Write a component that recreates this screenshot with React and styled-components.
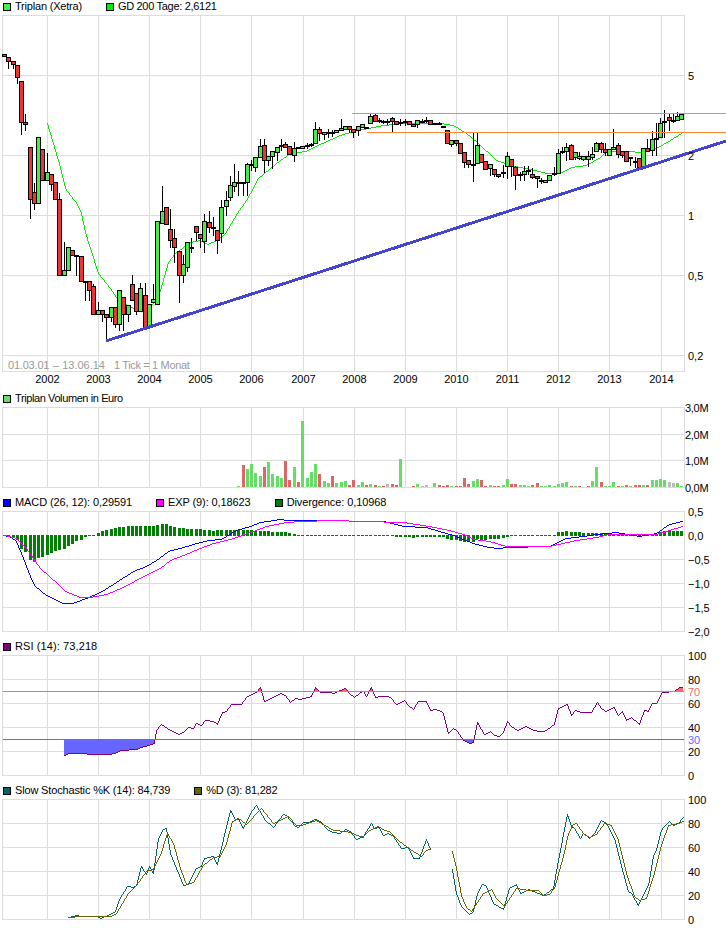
import React from "react";
import styled, { createGlobalStyle } from "styled-components";

const Global = createGlobalStyle`
  html, body { margin: 0; padding: 0; background: #fff; }
  body { font-family: "Liberation Sans", Arial, sans-serif; }
`;

const Page = styled.div`
  width: 726px;
  height: 928px;
  display: flex;
  flex-direction: column;
  overflow: hidden;
  background: #fff;
`;
const Legend = styled.div`
  height: 15px;
  box-sizing: border-box;
  padding: 0 0 2px 3px;
  display: flex;
  align-items: center;
  gap: 24px;
  font-size: 11px;
  line-height: 13px;
  color: #000;
  white-space: nowrap;
`;
const LegendItem = styled.div`
  display: flex;
  align-items: center;
  gap: 4px;
`;
const LegendLabel = styled.span`
  letter-spacing: ${(p) => p.$ls}px;
`;
const Swatch = styled.span`
  width: 8px;
  height: 8px;
  box-sizing: border-box;
  border: 1px solid #000;
  background: ${(p) => p.$color};
`;
const PlotSvg = styled.svg`
  display: block;
  width: 726px;
  flex: none;
  overflow: visible;
  font-family: "Liberation Sans", Arial, sans-serif;
  font-size: 11px;
`;
const Grid = styled.line`
  stroke: #dcdcdc;
  stroke-width: 1;
  shape-rendering: crispEdges;
`;
const CurvePath = styled.path`
  fill: ${(p) => p.$color};
  stroke: none;
  shape-rendering: crispEdges;
`;
const Area = styled.polygon`
  fill: ${(p) => p.$color};
  stroke: none;
  shape-rendering: crispEdges;
`;
const Bar = styled.rect`
  fill: ${(p) => p.$color};
  shape-rendering: crispEdges;
`;
const Body = styled.rect`
  fill: ${(p) => p.$color};
  stroke: #000;
  stroke-width: 1;
  shape-rendering: crispEdges;
`;
const Wick = styled.line`
  stroke: #000;
  stroke-width: 1;
  shape-rendering: crispEdges;
`;
const Level = styled.line`
  stroke: ${(p) => p.$color};
  stroke-width: ${(p) => p.$w || 1};
  shape-rendering: crispEdges;
`;
const AxisText = styled.text`
  fill: ${(p) => p.$color || "#000"};
  letter-spacing: ${(p) => p.$ls || 0}px;
`;

const GRID_X = [47, 98, 149, 200, 251, 303, 354, 405, 456, 507, 558, 609, 661];
const YEARS = [2002, 2003, 2004, 2005, 2006, 2007, 2008, 2009, 2010, 2011, 2012, 2013, 2014];
const LEFT = 2;
const RIGHT = 684;
const cx = (i) => Math.round(4 + 4.261 * i) + 0.5;
const snap = (v) => Math.floor(v) + 0.5;
const z = (ox, oy, pts) => pts.map(([x, y]) => `${snap(ox + x / 3)},${snap(oy + y / 3)}`);
const pts = (...groups) => groups.flat().join(" ");

/* Rasterises a polyline to single pixels, as the original chart image has aliased one-pixel strokes. */
const rasterise = (points) => {
  const list = points.split(" ").map((p) => p.split(",").map((n) => Math.floor(+n)));
  const seen = new Set();
  for (let n = 0; n < list.length - 1; n++) {
    let [x0, y0] = list[n];
    const [x1, y1] = list[n + 1];
    const dx = Math.abs(x1 - x0);
    const dy = Math.abs(y1 - y0);
    const sx = x0 < x1 ? 1 : -1;
    const sy = y0 < y1 ? 1 : -1;
    let err = dx - dy;
    for (;;) {
      seen.add(`M${x0} ${y0}h1v1h-1z`);
      if (x0 === x1 && y0 === y1) break;
      const e2 = 2 * err;
      if (e2 > -dy) { err -= dy; x0 += sx; }
      if (e2 < dx) { err += dx; y0 += sy; }
    }
  }
  return [...seen].join("");
};

const Curve = ({ points, $color }) => <CurvePath d={rasterise(points)} $color={$color} />;

function Plot({ top, height, rows, children, labels, x = 688, ls = 0 }) {
  const bottom = rows[rows.length - 1];
  return (
    <PlotSvg height={height} viewBox={`0 ${top} 726 ${height}`}>
      {rows.map((r) => (
        <Grid key={r} x1={LEFT} x2={RIGHT + 1} y1={r + 0.5} y2={r + 0.5} />
      ))}
      <Grid x1={LEFT + 0.5} x2={LEFT + 0.5} y1={rows[0]} y2={bottom + 1} />
      <Grid x1={RIGHT + 0.5} x2={RIGHT + 0.5} y1={rows[0]} y2={bottom + 1} />
      {GRID_X.map((g) => (
        <Grid key={g} x1={g + 0.5} x2={g + 0.5} y1={rows[0]} y2={bottom + 1} />
      ))}
      {children}
      {labels.map(([t, y, c]) => (
        <AxisText key={t} x={x} y={y + 5} $color={c} $ls={ls}>{t}</AxisText>
      ))}
    </PlotSvg>
  );
}

/* i, bodyTop, bodyBottom, high, low, kind: 1 up, 0 down, 2 doji */
const CANDLES = [
  [0,54,56,54,56,0],[1,57,61,57,68,0],[2,61,64,61,68,0],[3,65,77,65,83,0],[4,81,122,81,134,0],[5,122,124,114,130,0],
  [6,147,199,147,218,0],[7,192,203,183,209,0],[8,137,203,137,203,1],[9,149,180,149,180,0],[10,172,180,153,180,1],[11,174,184,174,190,0],
  [12,182,199,182,199,0],[13,199,275,193,275,0],[14,270,275,242,275,1],[15,247,270,247,270,1],[16,250,255,250,255,0],[17,255,255,255,275,2],
  [18,256,281,256,281,0],[19,281,281,281,300,2],[20,281,290,281,300,0],[21,286,314,284,314,0],[22,310,314,302,314,1],[23,310,314,310,321,0],
  [24,314,317,314,341,0],[25,307,317,307,321,1],[26,307,324,307,327,0],[27,290,324,290,330,1],[28,297,314,297,330,0],[29,305,314,305,321,1],
  [30,284,300,275,300,0],[31,293,311,293,314,0],[32,288,311,283,311,1],[33,295,327,283,327,0],[34,304,327,304,327,1],[35,299,302,284,302,1],
  [36,221,304,221,304,1],[37,211,223,186,223,1],[38,207,224,207,224,0],[39,229,240,209,247,0],[40,238,247,229,262,0],[41,251,275,251,302,0],
  [42,264,275,255,282,1],[43,242,267,242,271,1],[44,247,247,238,252,2],[45,226,232,226,240,0],[46,234,238,234,247,0],[47,221,241,214,252,1],
  [48,222,227,211,232,0],[49,227,227,217,235,2],[50,230,240,230,253,0],[51,207,233,200,242,1],[52,200,206,191,215,1],[53,185,197,176,200,1],
  [54,182,186,164,191,1],[55,182,182,171,195,2],[56,182,183,182,195,2],[57,164,182,163,195,1],[58,164,164,160,170,2],[59,157,167,157,171,1],
  [60,146,157,139,157,1],[61,145,160,139,172,0],[62,156,160,156,165,1],[63,151,156,151,168,1],[64,147,152,147,160,1],[65,145,145,139,150,2],
  [66,144,147,142,147,0],[67,146,154,146,154,0],[68,148,155,142,161,1],[69,147,147,147,148,2],[70,146,148,146,148,1],[71,145,146,143,148,1],
  [72,144,145,143,146,2],[73,129,143,122,143,1],[74,129,133,127,140,0],[75,132,134,132,139,1],[76,132,132,129,137,2],[77,132,132,130,136,2],
  [78,130,132,130,132,1],[79,128,130,119,130,1],[80,126,129,126,129,1],[81,126,129,126,132,0],[82,129,132,129,137,0],[83,126,130,126,135,1],
  [84,124,127,124,127,1],[85,127,127,127,128,2],[86,116,123,113,123,1],[87,115,121,113,121,0],[88,120,120,118,122,2],[89,121,121,120,123,2],
  [90,121,121,119,124,2],[91,118,121,117,132,0],[92,121,124,121,124,0],[93,122,122,119,125,2],[94,121,121,119,125,2],[95,121,124,121,124,0],
  [96,124,126,124,126,0],[97,120,124,120,127,1],[98,121,121,119,122,2],[99,120,120,117,122,2],[100,120,124,120,124,0],[101,123,123,123,124,2],
  [102,123,123,122,124,2],[103,126,126,126,127,2],[104,130,143,130,143,0],[105,140,144,140,146,1],[106,140,143,140,145,0],[107,143,153,143,153,0],
  [108,152,162,152,167,0],[109,160,164,160,167,0],[110,164,164,133,181,2],[111,145,163,133,163,1],[112,154,162,154,162,0],[113,161,169,161,169,0],
  [114,164,168,164,175,1],[115,169,174,169,176,0],[116,174,176,174,177,0],[117,172,172,165,177,2],[118,156,166,152,178,1],[119,159,166,159,176,0],
  [120,167,175,166,189,0],[121,174,174,172,180,2],[122,171,174,166,180,1],[123,170,170,166,174,2],[124,174,177,168,178,0],[125,176,178,176,187,0],
  [126,180,180,178,183,2],[127,180,182,180,182,1],[128,175,180,175,180,1],[129,173,173,167,175,2],[130,153,173,149,173,1],[131,151,151,147,153,2],
  [132,147,151,143,160,1],[133,145,159,144,159,0],[134,152,157,152,159,1],[135,156,158,152,159,1],[136,156,159,156,160,1],[137,156,159,151,166,1],
  [138,154,157,147,159,1],[139,143,151,142,151,1],[140,143,149,142,152,0],[141,149,152,143,155,0],[142,149,155,149,155,1],[143,147,149,129,149,1],
  [144,145,154,143,157,0],[145,151,155,151,157,0],[146,151,161,151,161,0],[147,157,157,157,165,2],[148,161,161,157,167,2],[149,158,167,158,167,0],
  [150,148,166,148,167,1],[151,148,151,139,151,0],[152,139,150,131,155,1],[153,138,138,123,155,2],[154,123,137,118,137,1],[155,121,121,110,137,2],
  [156,117,120,113,130,0],[157,120,120,113,122,2],[158,116,120,112,120,1],[159,114,119,114,119,1],
];

const MA = pts(
  [[47,123],[53,143],[60,167],[65,188],[73,199],[76,202],[81,213],[85,232],[90,248],[98,273],[110,288],[118,300],[133,308],[147,307],[157,300],[162,283],[168,262],[175,253],[190,242],[200,240],[207,244],[217,240],[225,233],[237,213],[246,200],[250,193],[258,178],[270,168],[280,160],[290,153],[305,151],[322,143],[340,135],[353,131],[363,129],[383,125],[403,123],[440,123],[453,125],[466,133],[478,143],[496,160],[510,165],[530,169],[546,173],[560,173],[571,167],[586,165],[600,157],[606,151],[626,151],[643,152],[656,148],[670,140],[681,133]].map(([x,y]) => `${x + 0.5},${y + 0.5}`)
);

const VOL = [[55,1,"g"],[56,22,"r"],[57,18,"g"],[58,23,"g"],[59,14,"g"],[60,11,"g"],[61,20,"r"],[62,25,"g"],[63,13,"g"],[64,11,"g"],[65,9,"g"],[66,26,"r"],[67,7,"r"],[68,20,"g"],[69,5,"r"],[70,66,"g"],[71,9,"g"],[72,15,"g"],[73,23,"g"],[74,13,"r"],[75,6,"g"],[76,4,"g"],[77,11,"r"],[78,4,"g"],[79,5,"g"],[80,6,"g"],[81,2,"r"],[82,7,"r"],[83,2,"g"],[84,5,"g"],[85,2,"r"],[86,3,"g"],[87,2,"r"],[88,1,"g"],[89,1,"r"],[90,3,"n"],[91,3,"r"],[92,2,"r"],[93,28,"g"],[96,1,"r"],[97,3,"g"],[98,1,"n"],[99,2,"n"],[101,4,"g"],[102,2,"r"],[103,1,"r"],[104,2,"r"],[105,1,"g"],[106,1,"r"],[107,1,"r"],[108,9,"r"],[109,3,"r"],[110,6,"g"],[111,8,"g"],[112,7,"r"],[113,1,"r"],[114,2,"g"],[115,1,"r"],[116,1,"r"],[117,2,"g"],[118,8,"g"],[119,3,"r"],[120,3,"r"],[121,2,"g"],[122,2,"g"],[123,1,"g"],[124,2,"r"],[125,4,"r"],[126,1,"g"],[127,1,"g"],[128,2,"g"],[129,1,"g"],[130,3,"g"],[131,4,"g"],[132,5,"g"],[133,1,"r"],[134,1,"g"],[135,1,"r"],[137,1,"r"],[138,6,"g"],[139,20,"g"],[140,5,"r"],[141,1,"g"],[142,1,"g"],[143,5,"g"],[144,1,"r"],[145,1,"g"],[146,2,"r"],[147,1,"g"],[148,2,"r"],[149,2,"r"],[150,2,"g"],[151,2,"r"],[152,7,"g"],[153,7,"g"],[154,8,"g"],[155,7,"g"],[156,5,"n"],[157,4,"n"],[158,4,"g"],[159,1,"g"]];
const VOL_COLOR = { g: "#66dd66", r: "#dd6666", n: "#bbbbbb" };

const DIV = [0,-1,-3,-5,-14,-17,-25,-27,-23,-22,-20,-18,-16,-15,-14,-11,-9,-6,-5,-2,-1,0,3,5,6,7,8,9,9,10,10,10,10,10,10,10,11,12,12,10,9,8,8,7,7,7,7,6,6,5,6,6,6,6,6,6,6,6,6,5,5,5,5,4,4,4,4,3,2,1,1,0,0,0,1,1,1,0,0,0,0,0,0,0,-1,-1,0,0,0,0,-1,-1,-2,-2,-2,-2,-3,-2,-2,-2,-2,-2,-2,-2,-4,-5,-5,-6,-7,-7,-7,-4,-5,-5,-4,-4,-4,-3,-2,-1,-1,-1,-1,0,0,0,0,0,1,1,4,4,5,4,4,4,3,3,3,3,3,2,2,2,1,1,1,0,-1,-1,0,0,1,2,4,5,5,5,5,5];

const MACD = pts(
  z(0,490,[[12,136],[35,142],[50,155],[70,205],[90,260],[105,288],[140,315],[190,340],[218,340],[260,325],[300,308],[350,277],[400,245],[440,230],[470,210],[505,183],[550,173],[600,158],[625,150],[665,147],[710,120],[750,108],[780,97],[840,88],[860,90],[1000,92],[1089,94]]),
  z(363,490,[[0,95],[60,95],[120,108],[190,113],[230,125],[270,135],[330,160],[375,172],[410,175],[430,172],[560,170],[610,145],[660,138],[700,132],[760,128],[810,136],[830,139],[880,130],[920,103],[958,94]])
);
const EXP = pts(
  z(0,490,[[12,136],[50,145],[80,175],[120,235],[175,283],[195,303],[240,322],[270,322],[320,314],[370,292],[430,260],[480,235],[510,212],[550,195],[600,175],[640,160],[690,147],[750,127],[800,108],[860,96],[900,93],[1000,90],[1089,94]]),
  z(363,490,[[0,94],[120,98],[200,108],[260,120],[300,132],[330,148],[380,155],[430,168],[560,170],[640,152],[700,143],[740,134],[800,133],[880,134],[920,120],[958,108]])
);

const RSI_PTS = [
  ...z(0,635,[[192,362],[205,355],[260,355],[262,358],[325,358],[345,354],[360,346],[410,343],[425,336],[445,330],[463,324],[470,285],[485,268],[510,285],[535,297],[550,292],[565,277],[580,280],[590,265],[605,272],[615,256],[640,258],[652,268],[668,232],[680,228],[695,208],[725,207],[742,183],[770,173],[780,157],[793,198],[840,175],[855,180],[872,203],[885,190],[900,192],[935,183],[945,157],[962,172],[990,172],[1000,176],[1020,165],[1035,160],[1048,176],[1063,187],[1080,172],[1089,170]]),
  ...z(363,635,[[0,170],[10,185],[25,157],[38,187],[50,183],[75,185],[85,190],[100,208],[125,196],[140,215],[152,224],[165,199],[190,199],[203,226],[215,222],[230,225],[242,236],[255,296],[270,280],[282,288],[300,316],[318,326],[330,322],[343,262],[365,298],[382,290],[395,300],[408,304],[420,292],[433,260],[445,275],[462,286],[490,274],[510,286],[530,289],[545,289],[575,268],[585,220],[612,208],[625,241],[638,226],[655,232],[685,231],[702,202],[715,220],[728,229],[755,216],[765,241],[778,229],[790,256],[805,248],[830,268],[845,225],[855,230],[868,205],[880,205],[897,171],[935,168],[950,158],[958,158]]),
];
const RSI = RSI_PTS.join(" ");
const RSI_END = RSI_PTS[RSI_PTS.length - 1].split(",")[0];

const K1 = pts(
  z(0,780,[[205,411],[228,406],[240,410],[290,409],[300,414],[315,408],[345,395],[358,358],[383,318],[400,322],[410,315],[423,260],[438,282],[448,258],[460,280],[475,175],[490,147],[498,145],[510,220],[550,315],[565,312],[590,265],[605,258],[612,235],[640,230],[653,252],[690,92],[705,118],[715,115],[730,145],[750,100],[770,76],[795,120],[820,142],[850,103],[860,105],[885,140],[895,142],[910,128],[925,128],[945,118],[960,125],[985,152],[1000,158],[1020,160],[1035,148],[1050,155],[1070,178],[1089,170]]),
  z(363,780,[[0,170],[25,130],[35,145],[50,142],[62,165],[75,160],[90,168],[115,205],[135,202],[150,235],[170,235],[190,178],[203,208]])
);
const K2 = pts(z(363,780,[[268,268],[280,340],[295,380],[320,403],[330,395],[342,340],[358,313],[370,320],[390,370],[420,388],[440,325],[460,313],[473,340],[495,328],[540,345],[570,325],[585,240],[612,103],[625,140],[635,145],[652,175],[660,160],[680,175],[695,160],[715,120],[730,130],[755,175],[780,280],[795,335],[805,340],[825,377],[845,340],[855,315],[870,230],[880,210],[895,150],[905,140],[920,125],[932,135],[945,130],[960,112]]));
const D1 = pts(
  z(0,780,[[205,411],[240,410],[290,410],[330,410],[350,400],[385,340],[410,315],[440,275],[460,268],[480,225],[503,160],[520,190],[540,265],[560,312],[580,306],[610,255],[640,232],[660,228],[680,190],[698,125],[715,115],[740,133],[785,85],[820,130],[865,110],[890,135],[905,135],[950,120],[1000,150],[1040,155],[1089,172]]),
  z(363,780,[[0,170],[20,150],[45,138],[65,152],[80,155],[110,185],[130,200],[150,215],[175,230],[190,210],[203,205]])
);
const D2 = pts(z(363,780,[[268,215],[280,265],[295,345],[310,382],[325,395],[360,340],[385,328],[400,355],[425,380],[460,325],[495,332],[525,330],[540,345],[560,342],[575,325],[600,230],[615,160],[630,132],[640,130],[660,160],[680,172],[700,162],[725,130],[745,135],[765,180],[790,280],[815,350],[830,362],[850,355],[870,290],[895,195],[915,135],[945,130],[960,125]]));

const series = (...items) => (
  <Legend>
    {items.map(([color, text, ls]) => (
      <LegendItem key={text}>
        <Swatch $color={color} />
        <LegendLabel $ls={ls}>{text}</LegendLabel>
      </LegendItem>
    ))}
  </Legend>
);

export default function App() {
  return (
    <Page>
      <Global />
      {series(["#44ee44", "Triplan (Xetra)", -0.2], ["#00ee00", "GD 200 Tage: 2,6121", -0.3])}
      <Plot
        top={15}
        height={377}
        rows={[15, 75, 155, 215, 275, 355, 371]}
        labels={[["5", 75], ["2", 155], ["1", 215], ["0,5", 275], ["0,2", 355]]}
      >
        <Curve points={MA} $color="#00ee00" />
        {CANDLES.map(([i, t, b, h, l]) => (
          <Wick key={i} x1={cx(i)} x2={cx(i)} y1={h} y2={l + 1} />
        ))}
        {CANDLES.map(([i, t, b, h, l, k]) =>
          k === 2 ? (
            <Bar key={i} x={cx(i) - 2.5} y={t} width={5} height={Math.max(b - t, 1) + 1} $color="#000" />
          ) : (
            <Body key={i} x={cx(i) - 2} y={t + 0.5} width={4} height={b - t} $color={k ? "#44ee44" : "#ee3333"} />
          )
        )}
        <Level x1={352} x2={726} y1={113.5} y2={113.5} $color="#ff8833" />
        <Level x1={367} x2={726} y1={132.5} y2={132.5} $color="#ff8833" />
        <Level x1={106} x2={726} y1={341} y2={141} $color="#4444cc" $w={3} />
        <AxisText x={8} y={369} $color="#999" $ls={-0.2}>01.03.01</AxisText>
        <AxisText x={53} y={369} $color="#999">– 13.06.14</AxisText>
        <AxisText x={114} y={369} $color="#999" $ls={-0.35}>1 Tick = 1 Monat</AxisText>
        {YEARS.map((y, n) => (
          <AxisText key={y} x={GRID_X[n] + 0.5} y={383} textAnchor="middle">{y}</AxisText>
        ))}
      </Plot>

      {series(["#66dd66", "Triplan Volumen in Euro", -0.4])}
      <Plot
        top={407}
        height={89}
        rows={[407, 434, 460, 487]}
        x={685}
        ls={-0.3}
        labels={[["3,0M", 407], ["2,0M", 434], ["1,0M", 460], ["0,0M", 487]]}
      >
        {VOL.map(([i, h, c]) => (
          <Bar key={i} x={cx(i) - 1.5} y={487 - h} width={3} height={h} $color={VOL_COLOR[c]} />
        ))}
      </Plot>

      {series(["#0000ff", "MACD (26, 12): 0,29591", -0.1], ["#ff00ff", "EXP (9): 0,18623", -0.1], ["#008000", "Divergence: 0,10968", -0.1])}
      <Plot
        top={511}
        height={129}
        rows={[511, 559, 583, 607, 631]}
        labels={[["0,5", 511], ["0,0", 535], ["−0,5", 559], ["−1,0", 583], ["−1,5", 607], ["−2,0", 631]]}
      >
        {DIV.map((v, i) => (
          <Bar key={i} x={cx(i) - 1.5} y={v > 0 ? 536 - v : 535} width={3} height={Math.abs(v) || 1} $color="#008000" />
        ))}
        <Curve points={MACD} $color="#0000ff" />
        <Curve points={EXP} $color="#ff00ff" />
      </Plot>

      {series(["#800080", "RSI (14): 73,218", 0.1])}
      <Plot
        top={655}
        height={129}
        rows={[655, 679, 703, 727, 751, 775]}
        labels={[["100", 655], ["80", 679], ["70", 691, "#ff6666"], ["60", 703], ["40", 727], ["30", 739, "#6666ff"], ["20", 751], ["0", 775]]}
      >
        <defs>
          <clipPath id="over"><rect x="0" y="655" width="726" height="36" /></clipPath>
          <clipPath id="under"><rect x="0" y="739.5" width="726" height="36" /></clipPath>
        </defs>
        <g clipPath="url(#over)">
          <Area points={`64,691 ${RSI} ${RSI_END},691`} $color="#ff6666" />
        </g>
        <g clipPath="url(#under)">
          <Area points={`64,739 ${RSI} ${RSI_END},739`} $color="#6666ff" />
        </g>
        <Curve points={RSI} $color="#800080" />
        <Level x1={3} x2={684} y1={691.5} y2={691.5} $color="#ff6666" />
        <Level x1={3} x2={684} y1={739.5} y2={739.5} $color="#6666ff" />
      </Plot>

      {series(["#006666", "Slow Stochastic %K (14): 84,739", -0.16], ["#666600", "%D (3): 81,282", -0.2])}
      <Plot
        top={799}
        height={129}
        rows={[799, 823, 847, 871, 895, 919]}
        labels={[["100", 799], ["80", 823], ["60", 847], ["40", 871], ["20", 895], ["0", 919]]}
      >
        <Curve points={K1} $color="#006666" />
        <Curve points={K2} $color="#006666" />
        <Curve points={D1} $color="#666600" />
        <Curve points={D2} $color="#666600" />
      </Plot>
    </Page>
  );
}
